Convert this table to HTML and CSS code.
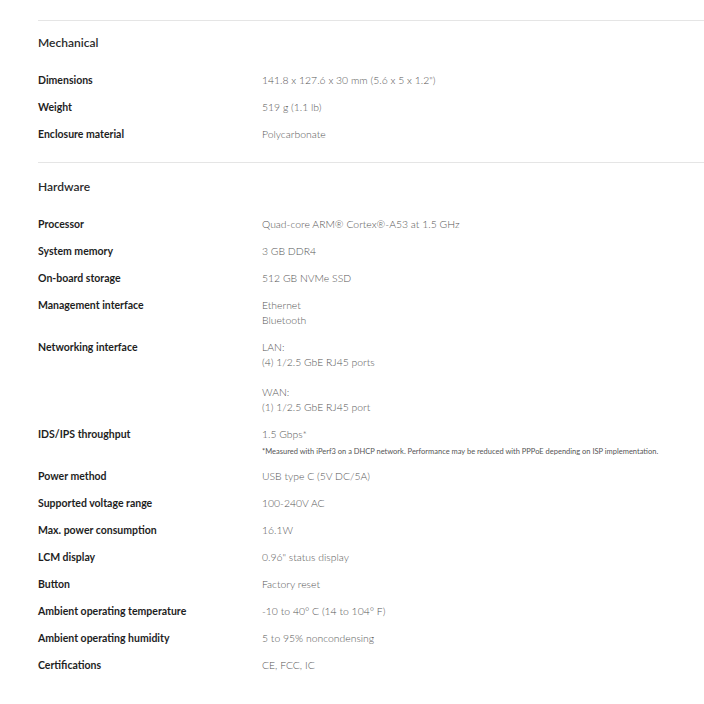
FILE: index.html
```html
<!DOCTYPE html>
<html lang="en">
<head>
    <meta charset="UTF-8">
    <title>Tech Specs</title>
    <link rel="stylesheet" href="styles.css">
</head>
<body>
    <div class="specs">
        <section class="spec-section">
            <h2 class="spec-title">Mechanical</h2>
            <div class="spec-rows">
                <div class="spec-label">Dimensions</div>
                <div class="spec-value">141.8 x 127.6 x 30 mm (5.6 x 5 x 1.2")</div>
                <div class="spec-label">Weight</div>
                <div class="spec-value">519 g (1.1 lb)</div>
                <div class="spec-label">Enclosure material</div>
                <div class="spec-value">Polycarbonate</div>
            </div>
        </section>
        <section class="spec-section">
            <h2 class="spec-title hw">Hardware</h2>
            <div class="spec-rows">
                <div class="spec-label">Processor</div>
                <div class="spec-value">Quad-core ARM® Cortex®-A53 at 1.5 GHz</div>
                <div class="spec-label">System memory</div>
                <div class="spec-value">3 GB DDR4</div>
                <div class="spec-label">On-board storage</div>
                <div class="spec-value">512 GB NVMe SSD</div>
                <div class="spec-label">Management interface</div>
                <div class="spec-value">Ethernet<br>Bluetooth</div>
                <div class="spec-label">Networking interface</div>
                <div class="spec-value">LAN:<br>(4) 1/2.5 GbE RJ45 ports<br><br>WAN:<br>(1) 1/2.5 GbE RJ45 port</div>
                <div class="spec-label">IDS/IPS throughput</div>
                <div class="spec-value">1.5 Gbps*
                    <div class="spec-note">*Measured with iPerf3 on a DHCP network. Performance may be reduced with PPPoE depending on ISP implementation.</div>
                </div>
                <div class="spec-label">Power method</div>
                <div class="spec-value">USB type C (5V DC/5A)</div>
                <div class="spec-label">Supported voltage range</div>
                <div class="spec-value">100-240V AC</div>
                <div class="spec-label">Max. power consumption</div>
                <div class="spec-value">16.1W</div>
                <div class="spec-label">LCM display</div>
                <div class="spec-value">0.96" status display</div>
                <div class="spec-label">Button</div>
                <div class="spec-value">Factory reset</div>
                <div class="spec-label">Ambient operating temperature</div>
                <div class="spec-value">-10 to 40° C (14 to 104° F)</div>
                <div class="spec-label">Ambient operating humidity</div>
                <div class="spec-value">5 to 95% noncondensing</div>
                <div class="spec-label">Certifications</div>
                <div class="spec-value">CE, FCC, IC</div>
            </div>
        </section>
    </div>
</body>
</html>
```

FILE: styles.css
```css
html, body {
    margin: 0;
    padding: 0;
    background: #fff;
}
body {
    font-family: 'Lato', 'Liberation Sans', Arial, sans-serif;
    color: #333;
}
.specs {
    padding: 20px 0 0 38px;
}
.spec-section {
    border-top: 1px solid #e5e5e5;
    padding-bottom: 20px;
}
.spec-title {
    margin: 0;
    padding-top: 14px;
    font-size: 12px;
    line-height: 16px;
    font-weight: 600;
    color: #2b2b2b;
}
.spec-title.hw {
    padding-top: 16px;
}
.spec-rows {
    display: grid;
    grid-template-columns: 224px 1fr;
    row-gap: 12px;
    margin-top: 22px;
    line-height: 15px;
}
.spec-label {
    font-size: 10.5px;
    font-weight: 700;
    color: #1e1e1e;
}
.spec-value {
    font-size: 10.4px;
    font-weight: 300;
    color: #555;
}
.spec-note {
    margin-top: 5px;
    font-size: 7.5px;
    line-height: 10px;
    font-weight: 400;
    color: #555;
}
```
